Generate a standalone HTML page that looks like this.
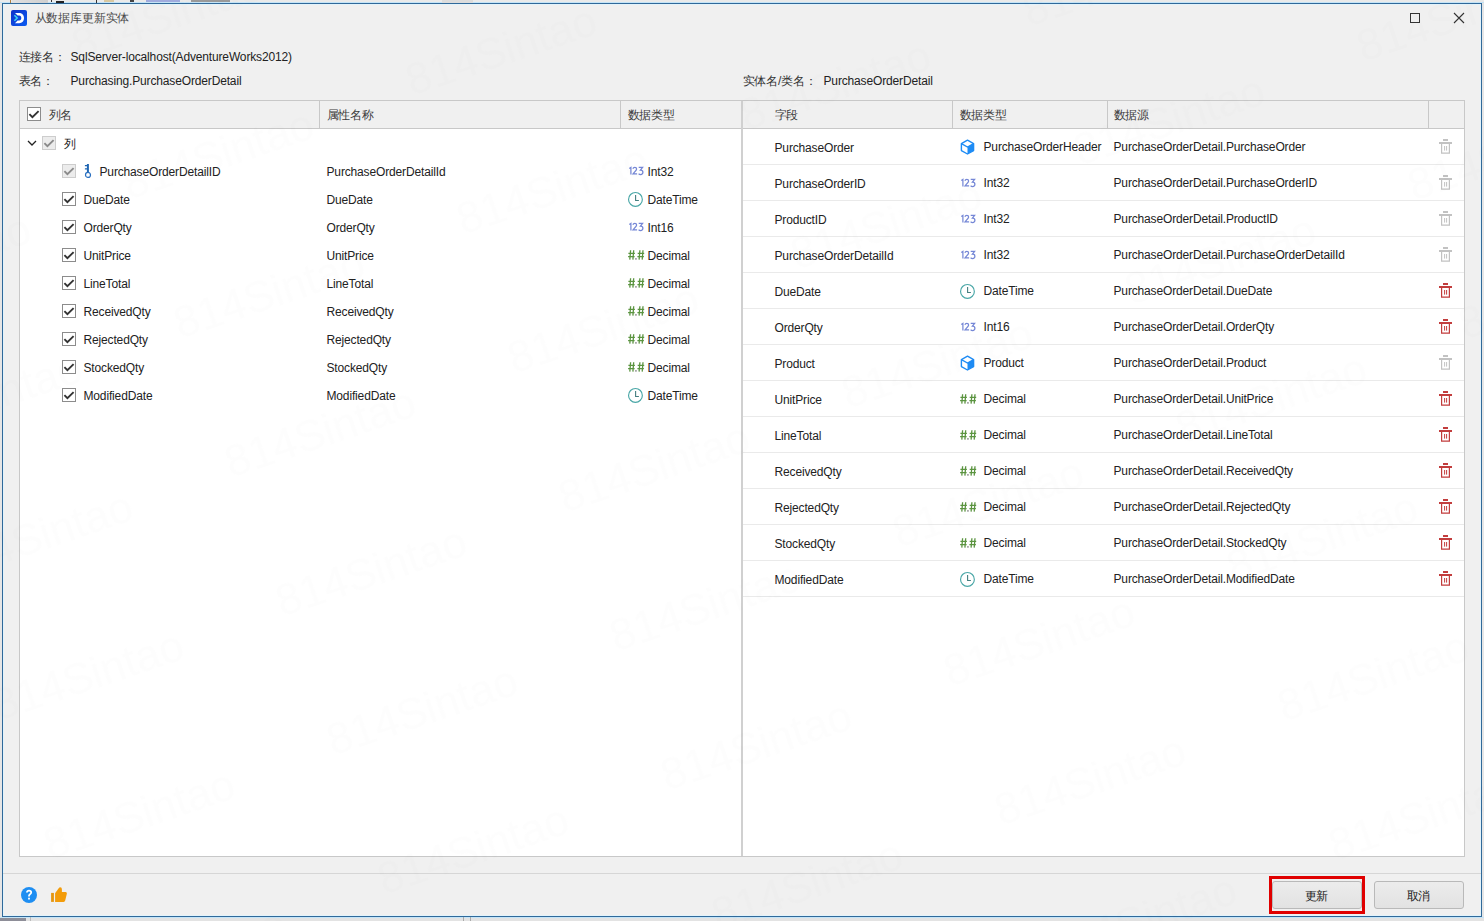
<!DOCTYPE html><html><head><meta charset="utf-8"><style>
*{margin:0;padding:0;box-sizing:border-box}
html,body{width:1484px;height:921px;overflow:hidden}
body{position:relative;background:#e6e6e6;font-family:"Liberation Sans",sans-serif;font-size:11.6px;color:#1b1b1b}
.ab{position:absolute;display:block}
.t{position:absolute;white-space:nowrap;line-height:16px;height:16px;letter-spacing:-0.15px}
.i123{position:absolute;font-family:"Liberation Sans",sans-serif;font-size:9.5px;line-height:14px;color:#7f91de;letter-spacing:-0.5px;transform:scaleX(0.9);transform-origin:left}
.idec{position:absolute;font-family:"Liberation Sans",sans-serif;font-weight:bold;font-size:10px;line-height:14px;color:#5f9a45;letter-spacing:-0.8px}
.hl{position:absolute;background:#c8c8c8}
.rl{position:absolute;background:#eaeaea;height:1px}
</style></head><body>
<div class="ab" style="left:0;top:0;width:1484px;height:3px;background:#eaeaea"></div>
<div class="ab" style="left:0;top:2px;width:1484px;height:1px;background:#c4e4f7"></div>
<div class="ab" style="left:0;top:917px;width:1484px;height:4px;background:#e3e3e3"></div>
<div class="ab" style="left:0;top:917px;width:1484px;height:1px;background:#c4e4f7"></div>
<div class="ab" style="left:12px;top:0;width:36px;height:3px;background:linear-gradient(90deg,#e0e0e0,#cfcfcf)"></div>
<div class="ab" style="left:10px;top:0;width:1px;height:3px;background:#b08040"></div>
<div class="ab" style="left:51px;top:0;width:1px;height:2px;background:#333"></div>
<div class="ab" style="left:56px;top:1px;width:8px;height:2px;background:#222"></div>
<div class="ab" style="left:96px;top:0;width:1px;height:3px;background:#333"></div>
<div class="ab" style="left:104px;top:0;width:10px;height:2px;background:#d8c8a0"></div>
<div class="ab" style="left:130px;top:0;width:4px;height:2px;background:#444"></div>
<div class="ab" style="left:146px;top:0;width:34px;height:2px;background:#8090d8;opacity:.7"></div>
<div class="ab" style="left:191px;top:0;width:39px;height:2px;background:#777;opacity:.7"></div>
<div class="ab" style="left:442px;top:0;width:31px;height:3px;background:#dcdcdc"></div>
<div class="ab" style="left:0;top:918px;width:26px;height:3px;background:#556;opacity:.6"></div>
<div class="ab" style="left:30px;top:917px;width:1px;height:4px;background:#bbb"></div>
<div class="ab" style="left:463px;top:917px;width:1px;height:4px;background:#aaa"></div>
<div class="ab" style="left:470px;top:917px;width:1px;height:4px;background:#aaa"></div>
<div class="ab" style="left:2px;top:3px;width:1480px;height:914px;border:1px solid #30699a;background:#f0f0f0"></div>
<div class="ab" style="left:3px;top:4px;width:1478px;height:912px;border:1px solid #e3f3fb"></div>
<svg class="ab" style="left:11px;top:10px" width="16" height="16" viewBox="0 0 16 16"><defs><linearGradient id="lg" x1="0" y1="0" x2="1" y2="1"><stop offset="0" stop-color="#1030c8"/><stop offset="1" stop-color="#0a5cf2"/></linearGradient></defs><rect x="0" y="0" width="16" height="16" rx="2" fill="url(#lg)"/><path d="M4 2.9H8.2C11.2 2.9 13 5.1 13 8.05C13 11 11.2 13.2 8.2 13.2H4L6.6 10.5H8.3C9.6 10.5 10.3 9.5 10.3 8.05C10.3 6.6 9.6 5.6 8.3 5.6H6.6Z" fill="#fff"/><path d="M3.4 5.2L6.2 8L3.4 10.8" fill="none" stroke="#3cd0f0" stroke-width="1.6"/></svg>
<div class="t" style="left:34.5px;top:10px;color:#4b4b4b;font-size:12px;">从数据库更新实体</div>
<div class="ab" style="left:1410px;top:13px;width:10px;height:10px;border:1px solid #333"></div>
<svg class="ab" style="left:1453px;top:12px" width="12" height="12" viewBox="0 0 12 12"><path d="M1 1L11 11M11 1L1 11" stroke="#333" stroke-width="1.1"/></svg>
<div class="t" style="left:18.5px;top:49px;color:#333;font-size:12px;">连接名：</div>
<div class="t" style="left:70.5px;top:49px;color:#222;font-size:12px;">SqlServer-localhost(AdventureWorks2012)</div>
<div class="t" style="left:18.5px;top:73px;color:#333;font-size:12px;">表名：</div>
<div class="t" style="left:70.5px;top:73px;color:#222;font-size:12px;">Purchasing.PurchaseOrderDetail</div>
<div class="t" style="left:742.5px;top:73px;color:#333;font-size:12px;">实体名/类名：</div>
<div class="t" style="left:823.5px;top:73px;color:#222;font-size:12px;">PurchaseOrderDetail</div>
<div class="ab" style="left:19px;top:100px;width:1446px;height:757px;border:1px solid #c8c8c8;background:#fff"></div>
<div class="ab" style="left:20px;top:101px;width:1444px;height:27px;background:#f0f0f0"></div>
<div class="hl" style="left:20px;top:128px;width:1444px;height:1px"></div>
<div class="hl" style="left:741px;top:101px;width:2px;height:755px;background:#d0d0d0"></div>
<div class="hl" style="left:319px;top:101px;width:1px;height:27px"></div>
<div class="hl" style="left:620px;top:101px;width:1px;height:27px"></div>
<div class="hl" style="left:952px;top:101px;width:1px;height:27px"></div>
<div class="hl" style="left:1107px;top:101px;width:1px;height:27px"></div>
<div class="hl" style="left:1428px;top:101px;width:1px;height:27px"></div>
<svg class="ab" style="left:27px;top:107px" width="14" height="14" viewBox="0 0 14 14"><rect x="0.5" y="0.5" width="13" height="13" fill="#fff" stroke="#8c8c8c" stroke-width="1"/><path d="M2.4 7.2L5.4 10.2L11.6 4.1" fill="none" stroke="#333" stroke-width="1.9"/></svg>
<div class="t" style="left:48.5px;top:107px;color:#3c3c3c;font-size:12px;">列名</div>
<div class="t" style="left:326.5px;top:107px;color:#3c3c3c;font-size:12px;">属性名称</div>
<div class="t" style="left:627.5px;top:107px;color:#3c3c3c;font-size:12px;">数据类型</div>
<div class="t" style="left:774.5px;top:107px;color:#3c3c3c;font-size:12px;">字段</div>
<div class="t" style="left:959.5px;top:107px;color:#3c3c3c;font-size:12px;">数据类型</div>
<div class="t" style="left:1113.5px;top:107px;color:#3c3c3c;font-size:12px;">数据源</div>
<svg class="ab" style="left:27px;top:139px" width="10" height="8" viewBox="0 0 10 8"><path d="M1 2L5 6L9 2" fill="none" stroke="#222" stroke-width="1.3"/></svg>
<svg class="ab" style="left:42px;top:136px" width="14" height="14" viewBox="0 0 14 14"><rect x="0.5" y="0.5" width="13" height="13" fill="#ececec" stroke="#cdcdcd" stroke-width="1"/><path d="M2.4 7.2L5.4 10.2L11.6 4.1" fill="none" stroke="#8a8a8a" stroke-width="1.9"/></svg>
<div class="t" style="left:63.5px;top:136px;color:#222;font-size:12px;">列</div>
<svg class="ab" style="left:62px;top:164px" width="14" height="14" viewBox="0 0 14 14"><rect x="0.5" y="0.5" width="13" height="13" fill="#ececec" stroke="#cdcdcd" stroke-width="1"/><path d="M2.4 7.2L5.4 10.2L11.6 4.1" fill="none" stroke="#8a8a8a" stroke-width="1.9"/></svg>
<svg class="ab" style="left:84px;top:163px" width="8" height="16" viewBox="0 0 8 16"><path d="M3.9 1V9.4" fill="none" stroke="#1f66b3" stroke-width="2"/><path d="M0.9 2.7H3M0.9 5.9H3" fill="none" stroke="#1f66b3" stroke-width="1.2"/><circle cx="4" cy="11.9" r="2.5" fill="none" stroke="#2a70c0" stroke-width="1.2"/></svg>
<div class="t" style="left:99.5px;top:164px;color:#222;font-size:12px;">PurchaseOrderDetailID</div>
<div class="t" style="left:326.5px;top:164px;color:#222;font-size:12px;">PurchaseOrderDetailId</div>
<svg class="ab" style="left:628px;top:166px" width="16" height="10" viewBox="0 0 16 10"><path d="M1.3 2.6L2.9 1.4V8.4M4.9 2.7C5.2 1.8 5.9 1.4 6.8 1.4C7.9 1.4 8.6 2 8.6 2.9C8.6 3.8 8 4.5 7.3 5.2L5.1 7.8H9.1M10.7 1.4H14.6L12.4 4.2C13.9 4.2 14.9 4.9 14.9 6.3C14.9 7.7 13.8 8.5 12.5 8.5C11.7 8.5 11.1 8.2 10.6 7.8" fill="none" stroke="#7587d6" stroke-width="1.25"/></svg>
<div class="t" style="left:647.5px;top:164px;color:#222;font-size:12px;">Int32</div>
<svg class="ab" style="left:62px;top:192px" width="14" height="14" viewBox="0 0 14 14"><rect x="0.5" y="0.5" width="13" height="13" fill="#fff" stroke="#8c8c8c" stroke-width="1"/><path d="M2.4 7.2L5.4 10.2L11.6 4.1" fill="none" stroke="#333" stroke-width="1.9"/></svg>
<div class="t" style="left:83.5px;top:192px;color:#222;font-size:12px;">DueDate</div>
<div class="t" style="left:326.5px;top:192px;color:#222;font-size:12px;">DueDate</div>
<svg class="ab" style="left:627px;top:191px" width="17" height="17" viewBox="0 0 17 17"><circle cx="8.45" cy="8.4" r="6.9" fill="none" stroke="#4aa7a7" stroke-width="1.15"/><path d="M8.6 3.9V9.5H11.9" fill="none" stroke="#457f80" stroke-width="1.1"/></svg>
<div class="t" style="left:647.5px;top:192px;color:#222;font-size:12px;">DateTime</div>
<svg class="ab" style="left:62px;top:220px" width="14" height="14" viewBox="0 0 14 14"><rect x="0.5" y="0.5" width="13" height="13" fill="#fff" stroke="#8c8c8c" stroke-width="1"/><path d="M2.4 7.2L5.4 10.2L11.6 4.1" fill="none" stroke="#333" stroke-width="1.9"/></svg>
<div class="t" style="left:83.5px;top:220px;color:#222;font-size:12px;">OrderQty</div>
<div class="t" style="left:326.5px;top:220px;color:#222;font-size:12px;">OrderQty</div>
<svg class="ab" style="left:628px;top:222px" width="16" height="10" viewBox="0 0 16 10"><path d="M1.3 2.6L2.9 1.4V8.4M4.9 2.7C5.2 1.8 5.9 1.4 6.8 1.4C7.9 1.4 8.6 2 8.6 2.9C8.6 3.8 8 4.5 7.3 5.2L5.1 7.8H9.1M10.7 1.4H14.6L12.4 4.2C13.9 4.2 14.9 4.9 14.9 6.3C14.9 7.7 13.8 8.5 12.5 8.5C11.7 8.5 11.1 8.2 10.6 7.8" fill="none" stroke="#7587d6" stroke-width="1.25"/></svg>
<div class="t" style="left:647.5px;top:220px;color:#222;font-size:12px;">Int16</div>
<svg class="ab" style="left:62px;top:248px" width="14" height="14" viewBox="0 0 14 14"><rect x="0.5" y="0.5" width="13" height="13" fill="#fff" stroke="#8c8c8c" stroke-width="1"/><path d="M2.4 7.2L5.4 10.2L11.6 4.1" fill="none" stroke="#333" stroke-width="1.9"/></svg>
<div class="t" style="left:83.5px;top:248px;color:#222;font-size:12px;">UnitPrice</div>
<div class="t" style="left:326.5px;top:248px;color:#222;font-size:12px;">UnitPrice</div>
<svg class="ab" style="left:628px;top:249px" width="17" height="12" viewBox="0 0 17 12"><path d="M2.6 1.3L1.8 10.6M5.7 1.3L4.9 10.6M0.4 4.4H6.9M0.1 7.7H6.6M11.9 1.3L11.1 10.6M15 1.3L14.2 10.6M9.7 4.4H16.2M9.4 7.7H15.9" fill="none" stroke="#5b9440" stroke-width="1.3"/><rect x="7.3" y="9.2" width="1.3" height="1.4" fill="#666"/></svg>
<div class="t" style="left:647.5px;top:248px;color:#222;font-size:12px;">Decimal</div>
<svg class="ab" style="left:62px;top:276px" width="14" height="14" viewBox="0 0 14 14"><rect x="0.5" y="0.5" width="13" height="13" fill="#fff" stroke="#8c8c8c" stroke-width="1"/><path d="M2.4 7.2L5.4 10.2L11.6 4.1" fill="none" stroke="#333" stroke-width="1.9"/></svg>
<div class="t" style="left:83.5px;top:276px;color:#222;font-size:12px;">LineTotal</div>
<div class="t" style="left:326.5px;top:276px;color:#222;font-size:12px;">LineTotal</div>
<svg class="ab" style="left:628px;top:277px" width="17" height="12" viewBox="0 0 17 12"><path d="M2.6 1.3L1.8 10.6M5.7 1.3L4.9 10.6M0.4 4.4H6.9M0.1 7.7H6.6M11.9 1.3L11.1 10.6M15 1.3L14.2 10.6M9.7 4.4H16.2M9.4 7.7H15.9" fill="none" stroke="#5b9440" stroke-width="1.3"/><rect x="7.3" y="9.2" width="1.3" height="1.4" fill="#666"/></svg>
<div class="t" style="left:647.5px;top:276px;color:#222;font-size:12px;">Decimal</div>
<svg class="ab" style="left:62px;top:304px" width="14" height="14" viewBox="0 0 14 14"><rect x="0.5" y="0.5" width="13" height="13" fill="#fff" stroke="#8c8c8c" stroke-width="1"/><path d="M2.4 7.2L5.4 10.2L11.6 4.1" fill="none" stroke="#333" stroke-width="1.9"/></svg>
<div class="t" style="left:83.5px;top:304px;color:#222;font-size:12px;">ReceivedQty</div>
<div class="t" style="left:326.5px;top:304px;color:#222;font-size:12px;">ReceivedQty</div>
<svg class="ab" style="left:628px;top:305px" width="17" height="12" viewBox="0 0 17 12"><path d="M2.6 1.3L1.8 10.6M5.7 1.3L4.9 10.6M0.4 4.4H6.9M0.1 7.7H6.6M11.9 1.3L11.1 10.6M15 1.3L14.2 10.6M9.7 4.4H16.2M9.4 7.7H15.9" fill="none" stroke="#5b9440" stroke-width="1.3"/><rect x="7.3" y="9.2" width="1.3" height="1.4" fill="#666"/></svg>
<div class="t" style="left:647.5px;top:304px;color:#222;font-size:12px;">Decimal</div>
<svg class="ab" style="left:62px;top:332px" width="14" height="14" viewBox="0 0 14 14"><rect x="0.5" y="0.5" width="13" height="13" fill="#fff" stroke="#8c8c8c" stroke-width="1"/><path d="M2.4 7.2L5.4 10.2L11.6 4.1" fill="none" stroke="#333" stroke-width="1.9"/></svg>
<div class="t" style="left:83.5px;top:332px;color:#222;font-size:12px;">RejectedQty</div>
<div class="t" style="left:326.5px;top:332px;color:#222;font-size:12px;">RejectedQty</div>
<svg class="ab" style="left:628px;top:333px" width="17" height="12" viewBox="0 0 17 12"><path d="M2.6 1.3L1.8 10.6M5.7 1.3L4.9 10.6M0.4 4.4H6.9M0.1 7.7H6.6M11.9 1.3L11.1 10.6M15 1.3L14.2 10.6M9.7 4.4H16.2M9.4 7.7H15.9" fill="none" stroke="#5b9440" stroke-width="1.3"/><rect x="7.3" y="9.2" width="1.3" height="1.4" fill="#666"/></svg>
<div class="t" style="left:647.5px;top:332px;color:#222;font-size:12px;">Decimal</div>
<svg class="ab" style="left:62px;top:360px" width="14" height="14" viewBox="0 0 14 14"><rect x="0.5" y="0.5" width="13" height="13" fill="#fff" stroke="#8c8c8c" stroke-width="1"/><path d="M2.4 7.2L5.4 10.2L11.6 4.1" fill="none" stroke="#333" stroke-width="1.9"/></svg>
<div class="t" style="left:83.5px;top:360px;color:#222;font-size:12px;">StockedQty</div>
<div class="t" style="left:326.5px;top:360px;color:#222;font-size:12px;">StockedQty</div>
<svg class="ab" style="left:628px;top:361px" width="17" height="12" viewBox="0 0 17 12"><path d="M2.6 1.3L1.8 10.6M5.7 1.3L4.9 10.6M0.4 4.4H6.9M0.1 7.7H6.6M11.9 1.3L11.1 10.6M15 1.3L14.2 10.6M9.7 4.4H16.2M9.4 7.7H15.9" fill="none" stroke="#5b9440" stroke-width="1.3"/><rect x="7.3" y="9.2" width="1.3" height="1.4" fill="#666"/></svg>
<div class="t" style="left:647.5px;top:360px;color:#222;font-size:12px;">Decimal</div>
<svg class="ab" style="left:62px;top:388px" width="14" height="14" viewBox="0 0 14 14"><rect x="0.5" y="0.5" width="13" height="13" fill="#fff" stroke="#8c8c8c" stroke-width="1"/><path d="M2.4 7.2L5.4 10.2L11.6 4.1" fill="none" stroke="#333" stroke-width="1.9"/></svg>
<div class="t" style="left:83.5px;top:388px;color:#222;font-size:12px;">ModifiedDate</div>
<div class="t" style="left:326.5px;top:388px;color:#222;font-size:12px;">ModifiedDate</div>
<svg class="ab" style="left:627px;top:387px" width="17" height="17" viewBox="0 0 17 17"><circle cx="8.45" cy="8.4" r="6.9" fill="none" stroke="#4aa7a7" stroke-width="1.15"/><path d="M8.6 3.9V9.5H11.9" fill="none" stroke="#457f80" stroke-width="1.1"/></svg>
<div class="t" style="left:647.5px;top:388px;color:#222;font-size:12px;">DateTime</div>
<div class="rl" style="left:743px;top:164px;width:721px"></div>
<div class="t" style="left:774.5px;top:140px;color:#222;font-size:12px;">PurchaseOrder</div>
<svg class="ab" style="left:960px;top:139px" width="15" height="16" viewBox="0 0 15 16"><path d="M7.5 1.2L13.6 4.6V11.6L7.5 15L1.4 11.6V4.6Z" fill="#fff" stroke="#1e8cf5" stroke-width="1.4" stroke-linejoin="round"/><path d="M7.5 8V15L13.6 11.6V4.6Z" fill="#1e8cf5"/><path d="M1.4 4.6L7.5 8L13.6 4.6" fill="none" stroke="#1e8cf5" stroke-width="1.3"/></svg>
<div class="t" style="left:983.5px;top:139px;color:#222;font-size:12px;">PurchaseOrderHeader</div>
<div class="t" style="left:1113.5px;top:139px;color:#222;font-size:12px;">PurchaseOrderDetail.PurchaseOrder</div>
<svg class="ab" style="left:1438px;top:139px" width="15" height="16" viewBox="0 0 15 16"><rect x="5" y="0" width="5" height="2" fill="#c2c2c2"/><rect x="1" y="3" width="13" height="2" fill="#c2c2c2"/><path d="M3.6 5V14.2H11.4V5" fill="none" stroke="#c2c2c2" stroke-width="1.2"/><rect x="6.1" y="7" width="1" height="4.6" fill="#c2c2c2"/><rect x="8.1" y="7" width="1" height="4.6" fill="#c2c2c2"/></svg>
<div class="rl" style="left:743px;top:200px;width:721px"></div>
<div class="t" style="left:774.5px;top:176px;color:#222;font-size:12px;">PurchaseOrderID</div>
<svg class="ab" style="left:960px;top:178px" width="16" height="10" viewBox="0 0 16 10"><path d="M1.3 2.6L2.9 1.4V8.4M4.9 2.7C5.2 1.8 5.9 1.4 6.8 1.4C7.9 1.4 8.6 2 8.6 2.9C8.6 3.8 8 4.5 7.3 5.2L5.1 7.8H9.1M10.7 1.4H14.6L12.4 4.2C13.9 4.2 14.9 4.9 14.9 6.3C14.9 7.7 13.8 8.5 12.5 8.5C11.7 8.5 11.1 8.2 10.6 7.8" fill="none" stroke="#7587d6" stroke-width="1.25"/></svg>
<div class="t" style="left:983.5px;top:175px;color:#222;font-size:12px;">Int32</div>
<div class="t" style="left:1113.5px;top:175px;color:#222;font-size:12px;">PurchaseOrderDetail.PurchaseOrderID</div>
<svg class="ab" style="left:1438px;top:175px" width="15" height="16" viewBox="0 0 15 16"><rect x="5" y="0" width="5" height="2" fill="#c2c2c2"/><rect x="1" y="3" width="13" height="2" fill="#c2c2c2"/><path d="M3.6 5V14.2H11.4V5" fill="none" stroke="#c2c2c2" stroke-width="1.2"/><rect x="6.1" y="7" width="1" height="4.6" fill="#c2c2c2"/><rect x="8.1" y="7" width="1" height="4.6" fill="#c2c2c2"/></svg>
<div class="rl" style="left:743px;top:236px;width:721px"></div>
<div class="t" style="left:774.5px;top:212px;color:#222;font-size:12px;">ProductID</div>
<svg class="ab" style="left:960px;top:214px" width="16" height="10" viewBox="0 0 16 10"><path d="M1.3 2.6L2.9 1.4V8.4M4.9 2.7C5.2 1.8 5.9 1.4 6.8 1.4C7.9 1.4 8.6 2 8.6 2.9C8.6 3.8 8 4.5 7.3 5.2L5.1 7.8H9.1M10.7 1.4H14.6L12.4 4.2C13.9 4.2 14.9 4.9 14.9 6.3C14.9 7.7 13.8 8.5 12.5 8.5C11.7 8.5 11.1 8.2 10.6 7.8" fill="none" stroke="#7587d6" stroke-width="1.25"/></svg>
<div class="t" style="left:983.5px;top:211px;color:#222;font-size:12px;">Int32</div>
<div class="t" style="left:1113.5px;top:211px;color:#222;font-size:12px;">PurchaseOrderDetail.ProductID</div>
<svg class="ab" style="left:1438px;top:211px" width="15" height="16" viewBox="0 0 15 16"><rect x="5" y="0" width="5" height="2" fill="#c2c2c2"/><rect x="1" y="3" width="13" height="2" fill="#c2c2c2"/><path d="M3.6 5V14.2H11.4V5" fill="none" stroke="#c2c2c2" stroke-width="1.2"/><rect x="6.1" y="7" width="1" height="4.6" fill="#c2c2c2"/><rect x="8.1" y="7" width="1" height="4.6" fill="#c2c2c2"/></svg>
<div class="rl" style="left:743px;top:272px;width:721px"></div>
<div class="t" style="left:774.5px;top:248px;color:#222;font-size:12px;">PurchaseOrderDetailId</div>
<svg class="ab" style="left:960px;top:250px" width="16" height="10" viewBox="0 0 16 10"><path d="M1.3 2.6L2.9 1.4V8.4M4.9 2.7C5.2 1.8 5.9 1.4 6.8 1.4C7.9 1.4 8.6 2 8.6 2.9C8.6 3.8 8 4.5 7.3 5.2L5.1 7.8H9.1M10.7 1.4H14.6L12.4 4.2C13.9 4.2 14.9 4.9 14.9 6.3C14.9 7.7 13.8 8.5 12.5 8.5C11.7 8.5 11.1 8.2 10.6 7.8" fill="none" stroke="#7587d6" stroke-width="1.25"/></svg>
<div class="t" style="left:983.5px;top:247px;color:#222;font-size:12px;">Int32</div>
<div class="t" style="left:1113.5px;top:247px;color:#222;font-size:12px;">PurchaseOrderDetail.PurchaseOrderDetailId</div>
<svg class="ab" style="left:1438px;top:247px" width="15" height="16" viewBox="0 0 15 16"><rect x="5" y="0" width="5" height="2" fill="#c2c2c2"/><rect x="1" y="3" width="13" height="2" fill="#c2c2c2"/><path d="M3.6 5V14.2H11.4V5" fill="none" stroke="#c2c2c2" stroke-width="1.2"/><rect x="6.1" y="7" width="1" height="4.6" fill="#c2c2c2"/><rect x="8.1" y="7" width="1" height="4.6" fill="#c2c2c2"/></svg>
<div class="rl" style="left:743px;top:308px;width:721px"></div>
<div class="t" style="left:774.5px;top:284px;color:#222;font-size:12px;">DueDate</div>
<svg class="ab" style="left:959px;top:283px" width="17" height="17" viewBox="0 0 17 17"><circle cx="8.45" cy="8.4" r="6.9" fill="none" stroke="#4aa7a7" stroke-width="1.15"/><path d="M8.6 3.9V9.5H11.9" fill="none" stroke="#457f80" stroke-width="1.1"/></svg>
<div class="t" style="left:983.5px;top:283px;color:#222;font-size:12px;">DateTime</div>
<div class="t" style="left:1113.5px;top:283px;color:#222;font-size:12px;">PurchaseOrderDetail.DueDate</div>
<svg class="ab" style="left:1438px;top:283px" width="15" height="16" viewBox="0 0 15 16"><rect x="5" y="0" width="5" height="2" fill="#c23d3d"/><rect x="1" y="3" width="13" height="2" fill="#c23d3d"/><path d="M3.6 5V14.2H11.4V5" fill="none" stroke="#c23d3d" stroke-width="1.2"/><rect x="6.1" y="7" width="1" height="4.6" fill="#c23d3d"/><rect x="8.1" y="7" width="1" height="4.6" fill="#c23d3d"/></svg>
<div class="rl" style="left:743px;top:344px;width:721px"></div>
<div class="t" style="left:774.5px;top:320px;color:#222;font-size:12px;">OrderQty</div>
<svg class="ab" style="left:960px;top:322px" width="16" height="10" viewBox="0 0 16 10"><path d="M1.3 2.6L2.9 1.4V8.4M4.9 2.7C5.2 1.8 5.9 1.4 6.8 1.4C7.9 1.4 8.6 2 8.6 2.9C8.6 3.8 8 4.5 7.3 5.2L5.1 7.8H9.1M10.7 1.4H14.6L12.4 4.2C13.9 4.2 14.9 4.9 14.9 6.3C14.9 7.7 13.8 8.5 12.5 8.5C11.7 8.5 11.1 8.2 10.6 7.8" fill="none" stroke="#7587d6" stroke-width="1.25"/></svg>
<div class="t" style="left:983.5px;top:319px;color:#222;font-size:12px;">Int16</div>
<div class="t" style="left:1113.5px;top:319px;color:#222;font-size:12px;">PurchaseOrderDetail.OrderQty</div>
<svg class="ab" style="left:1438px;top:319px" width="15" height="16" viewBox="0 0 15 16"><rect x="5" y="0" width="5" height="2" fill="#c23d3d"/><rect x="1" y="3" width="13" height="2" fill="#c23d3d"/><path d="M3.6 5V14.2H11.4V5" fill="none" stroke="#c23d3d" stroke-width="1.2"/><rect x="6.1" y="7" width="1" height="4.6" fill="#c23d3d"/><rect x="8.1" y="7" width="1" height="4.6" fill="#c23d3d"/></svg>
<div class="rl" style="left:743px;top:380px;width:721px"></div>
<div class="t" style="left:774.5px;top:356px;color:#222;font-size:12px;">Product</div>
<svg class="ab" style="left:960px;top:355px" width="15" height="16" viewBox="0 0 15 16"><path d="M7.5 1.2L13.6 4.6V11.6L7.5 15L1.4 11.6V4.6Z" fill="#fff" stroke="#1e8cf5" stroke-width="1.4" stroke-linejoin="round"/><path d="M7.5 8V15L13.6 11.6V4.6Z" fill="#1e8cf5"/><path d="M1.4 4.6L7.5 8L13.6 4.6" fill="none" stroke="#1e8cf5" stroke-width="1.3"/></svg>
<div class="t" style="left:983.5px;top:355px;color:#222;font-size:12px;">Product</div>
<div class="t" style="left:1113.5px;top:355px;color:#222;font-size:12px;">PurchaseOrderDetail.Product</div>
<svg class="ab" style="left:1438px;top:355px" width="15" height="16" viewBox="0 0 15 16"><rect x="5" y="0" width="5" height="2" fill="#c2c2c2"/><rect x="1" y="3" width="13" height="2" fill="#c2c2c2"/><path d="M3.6 5V14.2H11.4V5" fill="none" stroke="#c2c2c2" stroke-width="1.2"/><rect x="6.1" y="7" width="1" height="4.6" fill="#c2c2c2"/><rect x="8.1" y="7" width="1" height="4.6" fill="#c2c2c2"/></svg>
<div class="rl" style="left:743px;top:416px;width:721px"></div>
<div class="t" style="left:774.5px;top:392px;color:#222;font-size:12px;">UnitPrice</div>
<svg class="ab" style="left:960px;top:393px" width="17" height="12" viewBox="0 0 17 12"><path d="M2.6 1.3L1.8 10.6M5.7 1.3L4.9 10.6M0.4 4.4H6.9M0.1 7.7H6.6M11.9 1.3L11.1 10.6M15 1.3L14.2 10.6M9.7 4.4H16.2M9.4 7.7H15.9" fill="none" stroke="#5b9440" stroke-width="1.3"/><rect x="7.3" y="9.2" width="1.3" height="1.4" fill="#666"/></svg>
<div class="t" style="left:983.5px;top:391px;color:#222;font-size:12px;">Decimal</div>
<div class="t" style="left:1113.5px;top:391px;color:#222;font-size:12px;">PurchaseOrderDetail.UnitPrice</div>
<svg class="ab" style="left:1438px;top:391px" width="15" height="16" viewBox="0 0 15 16"><rect x="5" y="0" width="5" height="2" fill="#c23d3d"/><rect x="1" y="3" width="13" height="2" fill="#c23d3d"/><path d="M3.6 5V14.2H11.4V5" fill="none" stroke="#c23d3d" stroke-width="1.2"/><rect x="6.1" y="7" width="1" height="4.6" fill="#c23d3d"/><rect x="8.1" y="7" width="1" height="4.6" fill="#c23d3d"/></svg>
<div class="rl" style="left:743px;top:452px;width:721px"></div>
<div class="t" style="left:774.5px;top:428px;color:#222;font-size:12px;">LineTotal</div>
<svg class="ab" style="left:960px;top:429px" width="17" height="12" viewBox="0 0 17 12"><path d="M2.6 1.3L1.8 10.6M5.7 1.3L4.9 10.6M0.4 4.4H6.9M0.1 7.7H6.6M11.9 1.3L11.1 10.6M15 1.3L14.2 10.6M9.7 4.4H16.2M9.4 7.7H15.9" fill="none" stroke="#5b9440" stroke-width="1.3"/><rect x="7.3" y="9.2" width="1.3" height="1.4" fill="#666"/></svg>
<div class="t" style="left:983.5px;top:427px;color:#222;font-size:12px;">Decimal</div>
<div class="t" style="left:1113.5px;top:427px;color:#222;font-size:12px;">PurchaseOrderDetail.LineTotal</div>
<svg class="ab" style="left:1438px;top:427px" width="15" height="16" viewBox="0 0 15 16"><rect x="5" y="0" width="5" height="2" fill="#c23d3d"/><rect x="1" y="3" width="13" height="2" fill="#c23d3d"/><path d="M3.6 5V14.2H11.4V5" fill="none" stroke="#c23d3d" stroke-width="1.2"/><rect x="6.1" y="7" width="1" height="4.6" fill="#c23d3d"/><rect x="8.1" y="7" width="1" height="4.6" fill="#c23d3d"/></svg>
<div class="rl" style="left:743px;top:488px;width:721px"></div>
<div class="t" style="left:774.5px;top:464px;color:#222;font-size:12px;">ReceivedQty</div>
<svg class="ab" style="left:960px;top:465px" width="17" height="12" viewBox="0 0 17 12"><path d="M2.6 1.3L1.8 10.6M5.7 1.3L4.9 10.6M0.4 4.4H6.9M0.1 7.7H6.6M11.9 1.3L11.1 10.6M15 1.3L14.2 10.6M9.7 4.4H16.2M9.4 7.7H15.9" fill="none" stroke="#5b9440" stroke-width="1.3"/><rect x="7.3" y="9.2" width="1.3" height="1.4" fill="#666"/></svg>
<div class="t" style="left:983.5px;top:463px;color:#222;font-size:12px;">Decimal</div>
<div class="t" style="left:1113.5px;top:463px;color:#222;font-size:12px;">PurchaseOrderDetail.ReceivedQty</div>
<svg class="ab" style="left:1438px;top:463px" width="15" height="16" viewBox="0 0 15 16"><rect x="5" y="0" width="5" height="2" fill="#c23d3d"/><rect x="1" y="3" width="13" height="2" fill="#c23d3d"/><path d="M3.6 5V14.2H11.4V5" fill="none" stroke="#c23d3d" stroke-width="1.2"/><rect x="6.1" y="7" width="1" height="4.6" fill="#c23d3d"/><rect x="8.1" y="7" width="1" height="4.6" fill="#c23d3d"/></svg>
<div class="rl" style="left:743px;top:524px;width:721px"></div>
<div class="t" style="left:774.5px;top:500px;color:#222;font-size:12px;">RejectedQty</div>
<svg class="ab" style="left:960px;top:501px" width="17" height="12" viewBox="0 0 17 12"><path d="M2.6 1.3L1.8 10.6M5.7 1.3L4.9 10.6M0.4 4.4H6.9M0.1 7.7H6.6M11.9 1.3L11.1 10.6M15 1.3L14.2 10.6M9.7 4.4H16.2M9.4 7.7H15.9" fill="none" stroke="#5b9440" stroke-width="1.3"/><rect x="7.3" y="9.2" width="1.3" height="1.4" fill="#666"/></svg>
<div class="t" style="left:983.5px;top:499px;color:#222;font-size:12px;">Decimal</div>
<div class="t" style="left:1113.5px;top:499px;color:#222;font-size:12px;">PurchaseOrderDetail.RejectedQty</div>
<svg class="ab" style="left:1438px;top:499px" width="15" height="16" viewBox="0 0 15 16"><rect x="5" y="0" width="5" height="2" fill="#c23d3d"/><rect x="1" y="3" width="13" height="2" fill="#c23d3d"/><path d="M3.6 5V14.2H11.4V5" fill="none" stroke="#c23d3d" stroke-width="1.2"/><rect x="6.1" y="7" width="1" height="4.6" fill="#c23d3d"/><rect x="8.1" y="7" width="1" height="4.6" fill="#c23d3d"/></svg>
<div class="rl" style="left:743px;top:560px;width:721px"></div>
<div class="t" style="left:774.5px;top:536px;color:#222;font-size:12px;">StockedQty</div>
<svg class="ab" style="left:960px;top:537px" width="17" height="12" viewBox="0 0 17 12"><path d="M2.6 1.3L1.8 10.6M5.7 1.3L4.9 10.6M0.4 4.4H6.9M0.1 7.7H6.6M11.9 1.3L11.1 10.6M15 1.3L14.2 10.6M9.7 4.4H16.2M9.4 7.7H15.9" fill="none" stroke="#5b9440" stroke-width="1.3"/><rect x="7.3" y="9.2" width="1.3" height="1.4" fill="#666"/></svg>
<div class="t" style="left:983.5px;top:535px;color:#222;font-size:12px;">Decimal</div>
<div class="t" style="left:1113.5px;top:535px;color:#222;font-size:12px;">PurchaseOrderDetail.StockedQty</div>
<svg class="ab" style="left:1438px;top:535px" width="15" height="16" viewBox="0 0 15 16"><rect x="5" y="0" width="5" height="2" fill="#c23d3d"/><rect x="1" y="3" width="13" height="2" fill="#c23d3d"/><path d="M3.6 5V14.2H11.4V5" fill="none" stroke="#c23d3d" stroke-width="1.2"/><rect x="6.1" y="7" width="1" height="4.6" fill="#c23d3d"/><rect x="8.1" y="7" width="1" height="4.6" fill="#c23d3d"/></svg>
<div class="rl" style="left:743px;top:596px;width:721px"></div>
<div class="t" style="left:774.5px;top:572px;color:#222;font-size:12px;">ModifiedDate</div>
<svg class="ab" style="left:959px;top:571px" width="17" height="17" viewBox="0 0 17 17"><circle cx="8.45" cy="8.4" r="6.9" fill="none" stroke="#4aa7a7" stroke-width="1.15"/><path d="M8.6 3.9V9.5H11.9" fill="none" stroke="#457f80" stroke-width="1.1"/></svg>
<div class="t" style="left:983.5px;top:571px;color:#222;font-size:12px;">DateTime</div>
<div class="t" style="left:1113.5px;top:571px;color:#222;font-size:12px;">PurchaseOrderDetail.ModifiedDate</div>
<svg class="ab" style="left:1438px;top:571px" width="15" height="16" viewBox="0 0 15 16"><rect x="5" y="0" width="5" height="2" fill="#c23d3d"/><rect x="1" y="3" width="13" height="2" fill="#c23d3d"/><path d="M3.6 5V14.2H11.4V5" fill="none" stroke="#c23d3d" stroke-width="1.2"/><rect x="6.1" y="7" width="1" height="4.6" fill="#c23d3d"/><rect x="8.1" y="7" width="1" height="4.6" fill="#c23d3d"/></svg>
<div class="ab" style="left:3px;top:873px;width:1478px;height:1px;background:#d6d6d6"></div>
<svg class="ab" style="left:21px;top:887px" width="16" height="16" viewBox="0 0 16 16"><circle cx="8" cy="8" r="8" fill="#1e8ef2"/><path d="M5.9 5.6C5.9 4.2 6.8 3.6 8 3.6C9.3 3.6 10.2 4.3 10.2 5.5C10.2 6.5 9.5 6.9 8.8 7.4C8.2 7.8 8 8.2 8 9V9.4" fill="none" stroke="#fff" stroke-width="1.8"/><rect x="7.1" y="10.7" width="1.8" height="1.8" fill="#fff"/></svg>
<svg class="ab" style="left:50px;top:886px" width="18" height="17" viewBox="0 0 18 17"><rect x="1.1" y="6.9" width="2.8" height="9" fill="#e4950f"/><path d="M5.1 7.2L8.5 2.6Q9.3 1.2 10.3 1.2Q11.9 1.3 11.9 3.2V6H15.7Q17 6.1 16.9 7.6L15.2 14.6Q14.9 15.9 13.6 15.9H5.1Z" fill="#f39c0a"/></svg>
<div class="ab" style="left:1269px;top:876px;width:96px;height:38px;border:3px solid #e00000"></div>
<div class="ab" style="left:1272px;top:881px;width:90px;height:28px;border:1px solid #b9b9b9;border-radius:3px;background:linear-gradient(#ececec,#e2e2e2)"></div>
<div class="ab" style="left:1374px;top:881px;width:90px;height:28px;border:1px solid #b9b9b9;border-radius:3px;background:linear-gradient(#ececec,#e2e2e2)"></div>
<div class="t" style="left:1304.5px;top:888px;color:#222;font-size:12px;">更新</div>
<div class="t" style="left:1406.5px;top:888px;color:#222;font-size:12px;">取消</div>
<svg class="ab" style="left:0;top:0;pointer-events:none;mix-blend-mode:multiply" width="1484" height="921" viewBox="0 0 1484 921"><g font-family="Liberation Sans" font-size="44" fill="#fdfdfd"><text transform="translate(-205,165) rotate(-18.5)">814Sintao</text><text transform="translate(78,61) rotate(-18.5)">814Sintao</text><text transform="translate(-154,304) rotate(-18.5)">814Sintao</text><text transform="translate(129,200) rotate(-18.5)">814Sintao</text><text transform="translate(412,96) rotate(-18.5)">814Sintao</text><text transform="translate(695,-8) rotate(-18.5)">814Sintao</text><text transform="translate(-103,443) rotate(-18.5)">814Sintao</text><text transform="translate(180,339) rotate(-18.5)">814Sintao</text><text transform="translate(463,235) rotate(-18.5)">814Sintao</text><text transform="translate(746,131) rotate(-18.5)">814Sintao</text><text transform="translate(1029,27) rotate(-18.5)">814Sintao</text><text transform="translate(-52,582) rotate(-18.5)">814Sintao</text><text transform="translate(231,478) rotate(-18.5)">814Sintao</text><text transform="translate(514,374) rotate(-18.5)">814Sintao</text><text transform="translate(797,270) rotate(-18.5)">814Sintao</text><text transform="translate(1080,166) rotate(-18.5)">814Sintao</text><text transform="translate(1363,62) rotate(-18.5)">814Sintao</text><text transform="translate(-1,721) rotate(-18.5)">814Sintao</text><text transform="translate(282,617) rotate(-18.5)">814Sintao</text><text transform="translate(565,513) rotate(-18.5)">814Sintao</text><text transform="translate(848,409) rotate(-18.5)">814Sintao</text><text transform="translate(1131,305) rotate(-18.5)">814Sintao</text><text transform="translate(1414,201) rotate(-18.5)">814Sintao</text><text transform="translate(-233,964) rotate(-18.5)">814Sintao</text><text transform="translate(50,860) rotate(-18.5)">814Sintao</text><text transform="translate(333,756) rotate(-18.5)">814Sintao</text><text transform="translate(616,652) rotate(-18.5)">814Sintao</text><text transform="translate(899,548) rotate(-18.5)">814Sintao</text><text transform="translate(1182,444) rotate(-18.5)">814Sintao</text><text transform="translate(1465,340) rotate(-18.5)">814Sintao</text><text transform="translate(101,999) rotate(-18.5)">814Sintao</text><text transform="translate(384,895) rotate(-18.5)">814Sintao</text><text transform="translate(667,791) rotate(-18.5)">814Sintao</text><text transform="translate(950,687) rotate(-18.5)">814Sintao</text><text transform="translate(1233,583) rotate(-18.5)">814Sintao</text><text transform="translate(718,930) rotate(-18.5)">814Sintao</text><text transform="translate(1001,826) rotate(-18.5)">814Sintao</text><text transform="translate(1284,722) rotate(-18.5)">814Sintao</text><text transform="translate(1052,965) rotate(-18.5)">814Sintao</text><text transform="translate(1335,861) rotate(-18.5)">814Sintao</text></g></svg>
</body></html>
